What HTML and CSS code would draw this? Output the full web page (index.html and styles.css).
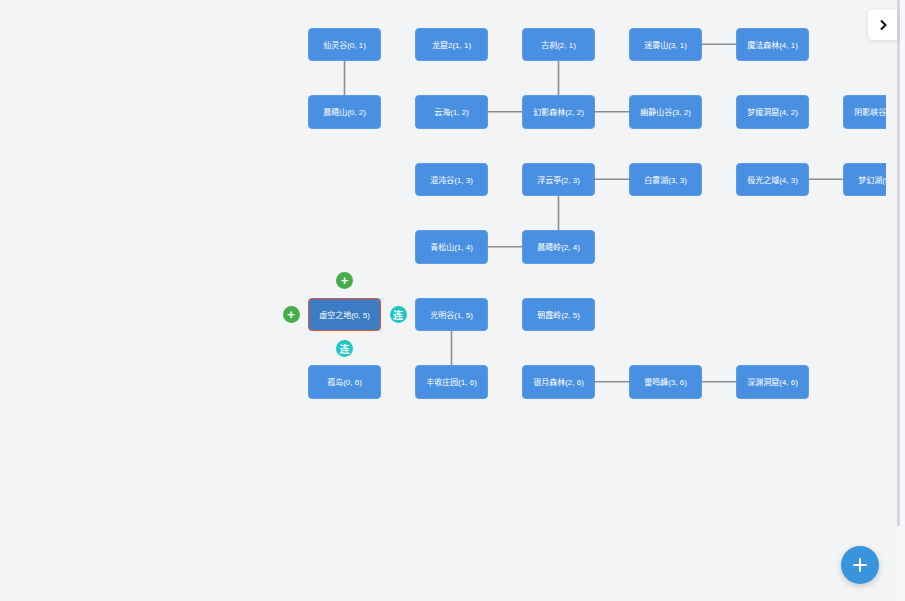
FILE: index.html
```html
<!DOCTYPE html>
<html lang="zh">
<head>
<meta charset="utf-8">
<title>地图编辑器</title>
<link rel="stylesheet" href="styles.css">
</head>
<body>
<div class="app">
  <main class="main">
    <div class="canvas">
      <svg class="edges" width="886" height="601" viewBox="0 0 886 601">
        <line x1="344.5" y1="44.25" x2="344.5" y2="111.75"/>
        <line x1="558.5" y1="44.25" x2="558.5" y2="111.75"/>
        <line x1="665.5" y1="44.25" x2="772.5" y2="44.25"/>
        <line x1="451.5" y1="111.75" x2="665.5" y2="111.75"/>
        <line x1="558.5" y1="179.25" x2="665.5" y2="179.25"/>
        <line x1="772.5" y1="179.25" x2="879.5" y2="179.25"/>
        <line x1="558.5" y1="179.25" x2="558.5" y2="246.75"/>
        <line x1="451.5" y1="246.75" x2="558.5" y2="246.75"/>
        <line x1="451.5" y1="314.25" x2="451.5" y2="381.75"/>
        <line x1="558.5" y1="381.75" x2="772.5" y2="381.75"/>
      </svg>

      <div class="node c0 r1">仙灵谷(0, 1)</div>
      <div class="node c1 r1">龙窟2(1, 1)</div>
      <div class="node c2 r1">古刹(2, 1)</div>
      <div class="node c3 r1">迷雾山(3, 1)</div>
      <div class="node c4 r1">魔法森林(4, 1)</div>

      <div class="node c0 r2">晨曦山(0, 2)</div>
      <div class="node c1 r2">云海(1, 2)</div>
      <div class="node c2 r2">幻影森林(2, 2)</div>
      <div class="node c3 r2">幽静山谷(3, 2)</div>
      <div class="node c4 r2">梦魇洞窟(4, 2)</div>
      <div class="node c5 r2">阴影峡谷(5, 2)</div>

      <div class="node c1 r3">混沌谷(1, 3)</div>
      <div class="node c2 r3">浮云亭(2, 3)</div>
      <div class="node c3 r3">白雾湖(3, 3)</div>
      <div class="node c4 r3">极光之域(4, 3)</div>
      <div class="node c5 r3">梦幻湖(5, 3)</div>

      <div class="node c1 r4">青松山(1, 4)</div>
      <div class="node c2 r4">晨曦岭(2, 4)</div>

      <div class="node c0 r5 selected">虚空之地(0, 5)</div>
      <div class="node c1 r5">光明谷(1, 5)</div>
      <div class="node c2 r5">朝霞岭(2, 5)</div>

      <div class="node c0 r6">孤岛(0, 6)</div>
      <div class="node c1 r6">丰收庄园(1, 6)</div>
      <div class="node c2 r6">银月森林(2, 6)</div>
      <div class="node c3 r6">雷鸣峰(3, 6)</div>
      <div class="node c4 r6">深渊洞窟(4, 6)</div>

      <button class="act add act-top">+</button>
      <button class="act add act-left">+</button>
      <button class="act link act-right">连</button>
      <button class="act link act-bottom">连</button>
    </div>

    <button class="panel-toggle" aria-label="展开">
      <svg width="10" height="12" viewBox="0 0 10 12"><polyline points="3,1.5 7.5,6 3,10.5" fill="none" stroke="#111" stroke-width="2"/></svg>
    </button>

    <button class="fab" aria-label="添加">
      <svg width="14" height="14" viewBox="0 0 14 14"><path d="M7 1v12M1 7h12" stroke="#fff" stroke-width="2" stroke-linecap="round"/></svg>
    </button>
  </main>
  <div class="rail"><div class="thumb"></div></div>
</div>
</body>
</html>
```
FILE: styles.css
```css
html, body {
  margin: 0;
  padding: 0;
  height: 100%;
  overflow: hidden;
  background: #f3f4f6;
  font-family: "Liberation Sans", "Noto Sans CJK SC", sans-serif;
}

.app {
  display: flex;
  height: 601px;
}

.main {
  position: relative;
  width: 897px;
  flex: none;
}

.canvas {
  position: relative;
  width: 886px;
  height: 601px;
  overflow: hidden;
}

.edges {
  position: absolute;
  left: 0;
  top: 0;
}

.edges line {
  stroke: #8c8c8c;
  stroke-width: 1.6;
}

.node {
  position: absolute;
  box-sizing: border-box;
  width: 73px;
  height: 33.5px;
  background: #4a90e2;
  border: 1px solid #5c9be6;
  border-radius: 4px;
  color: #fff;
  font-size: 8px;
  display: flex;
  align-items: center;
  justify-content: center;
  white-space: nowrap;
  overflow: hidden;
}

.node.selected {
  background: #3b7cc4;
  border: 1.5px solid #e6532c;
}

.c0 { left: 308px; }
.c1 { left: 415px; }
.c2 { left: 522px; }
.c3 { left: 629px; }
.c4 { left: 736px; }
.c5 { left: 843px; }

.r1 { top: 27.5px; }
.r2 { top: 95px; }
.r3 { top: 162.5px; }
.r4 { top: 230px; }
.r5 { top: 297.5px; }
.r6 { top: 365px; }

.act {
  position: absolute;
  width: 17px;
  height: 17px;
  border-radius: 50%;
  border: none;
  padding: 0;
  color: #fff;
  display: flex;
  align-items: center;
  justify-content: center;
  font-family: "Liberation Sans", "Noto Sans CJK SC", sans-serif;
}

.act.add {
  background: #46ad4c;
  font-size: 13px;
  font-weight: bold;
  line-height: 1;
}

.act.link {
  background: #1ec6c4;
  font-size: 10px;
  font-weight: bold;
}

.act-top { left: 336px; top: 272px; }
.act-left { left: 282.5px; top: 305.5px; }
.act-right { left: 389.5px; top: 305.5px; }
.act-bottom { left: 336px; top: 339.5px; }

.panel-toggle {
  position: absolute;
  left: 868px;
  top: 10px;
  width: 29px;
  height: 30px;
  border: none;
  padding: 0;
  background: #fff;
  border-radius: 4px 0 0 4px;
  box-shadow: 0 1px 4px rgba(0, 0, 0, 0.12);
  display: flex;
  align-items: center;
  justify-content: center;
}

.fab {
  position: absolute;
  left: 840.5px;
  top: 545.5px;
  width: 38px;
  height: 38px;
  border-radius: 50%;
  border: none;
  padding: 0;
  background: #3894dd;
  box-shadow: 0 2px 6px rgba(0, 0, 0, 0.2);
  display: flex;
  align-items: center;
  justify-content: center;
}

.rail {
  width: 8px;
  flex: none;
  background: #f7f7f9;
}

.rail .thumb {
  width: 2.5px;
  height: 526px;
  background: #d5d6dd;
}
```
